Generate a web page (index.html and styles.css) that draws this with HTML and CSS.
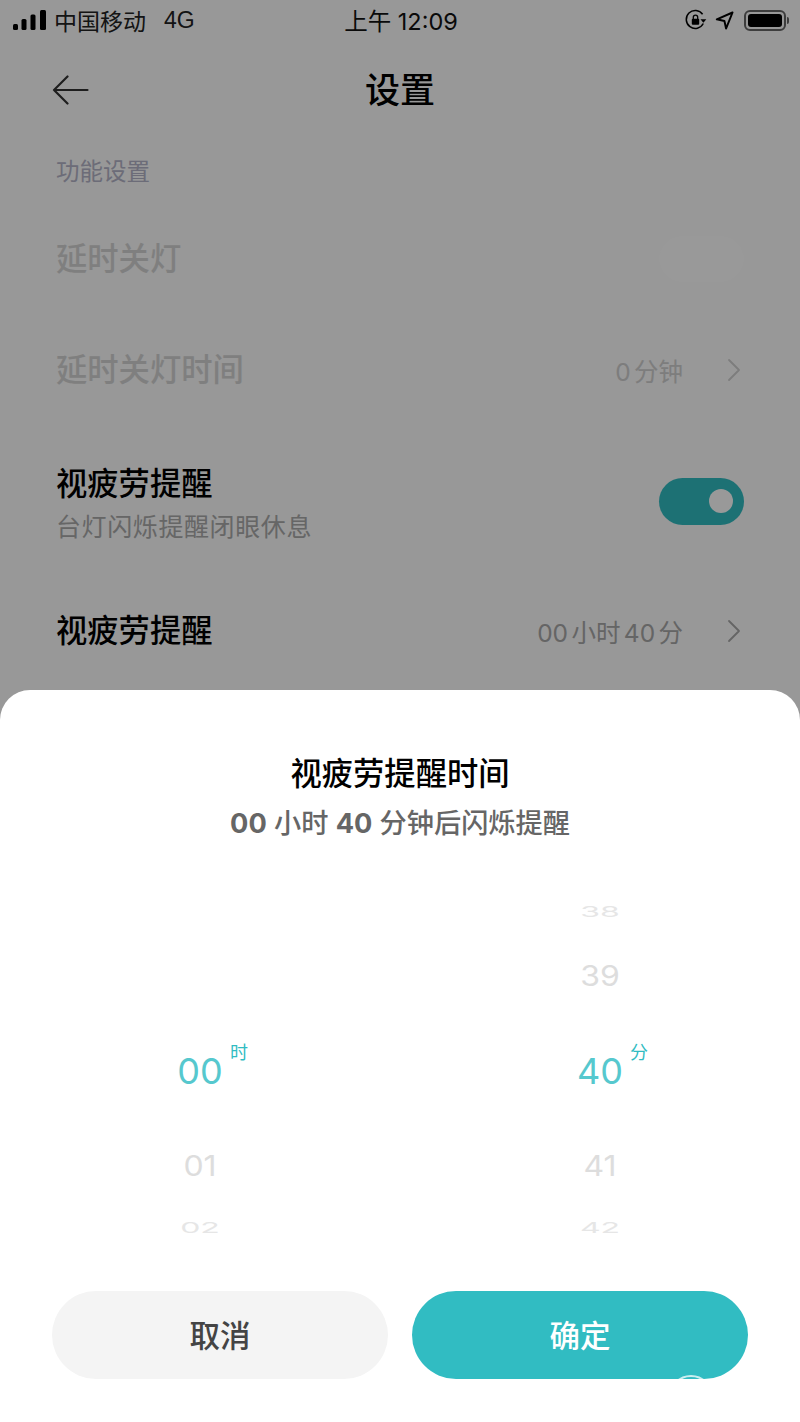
FILE: index.html
```html
<!DOCTYPE html>
<html lang="zh-CN">
<head>
<meta charset="utf-8">
<title>设置</title>
<link rel="stylesheet" href="styles.css">
</head>
<body>
<div class="page">
  <header class="status">
    <div class="status-left">
      <svg class="signal" width="34" height="22" viewBox="0 0 34 22"><rect x="0" y="14" width="5" height="6" rx="1.5"/><rect x="8.5" y="9" width="5" height="11" rx="1.5"/><rect x="17.5" y="4.5" width="5" height="15.5" rx="1.5"/><rect x="27" y="0" width="6" height="20" rx="1.5"/></svg>
      <span class="carrier">中国移动</span>
      <span class="net">4G</span>
    </div>
    <div class="clock">上午 12:09</div>
    <div class="status-right">
      <svg class="rot" width="22" height="22" viewBox="0 0 22 22"><path d="M18.3 14.5A9 9 0 1 1 17.6 5.2" fill="none" stroke="#000" stroke-width="1.5"/><path d="M15.500 10.200h5.800l-2.900 3.600z" fill="#000"/><rect x="6.800" y="9.800" width="7.400" height="6" rx="1" fill="#000"/><path d="M8.300 10V8.300a2.200 2.200 0 0 1 4.400 0V10" fill="none" stroke="#000" stroke-width="1.300"/></svg>
      <svg class="loc" width="19" height="19" viewBox="0 0 19 19"><path d="M17.500 1.500 1.800 8.300l7.600 1.600 1.700 7.600z" fill="none" stroke="#000" stroke-width="2" stroke-linejoin="round"/></svg>
      <div class="battery"><div class="battery-fill"></div></div>
      <div class="battery-nub"></div>
    </div>
  </header>

  <nav class="nav">
    <svg class="back" width="38" height="30" viewBox="0 0 38 30"><path d="M35.500 15H2M15.500 1.500 2 15l13.500 13.500" fill="none" stroke="#333" stroke-width="2.200" stroke-linecap="round" stroke-linejoin="round"/></svg>
    <h1 class="nav-title">设置</h1>
  </nav>

  <div class="section-label">功能设置</div>

  <div class="row row-first row-off">
    <span class="row-title">延时关灯</span>
    <span class="toggle-off"></span>
  </div>
  <div class="row row-second row-off">
    <span class="row-title">延时关灯时间</span>
    <span class="row-end">
      <span class="row-value">0 分钟</span>
      <svg class="chev" width="14" height="24" viewBox="0 0 14 24"><path d="M2 2l10 10L2 22" fill="none" stroke="currentColor" stroke-width="1.800" stroke-linecap="round" stroke-linejoin="round"/></svg>
    </span>
  </div>
  <div class="row row-third">
    <span class="row-text">
      <span class="row-title">视疲劳提醒</span>
      <span class="row-sub">台灯闪烁提醒闭眼休息</span>
    </span>
    <span class="toggle-on"><span class="knob"></span></span>
  </div>
  <div class="row row-fourth">
    <span class="row-title">视疲劳提醒</span>
    <span class="row-end">
      <span class="row-value">00 小时 40 分</span>
      <svg class="chev" width="14" height="24" viewBox="0 0 14 24"><path d="M2 2l10 10L2 22" fill="none" stroke="currentColor" stroke-width="1.800" stroke-linecap="round" stroke-linejoin="round"/></svg>
    </span>
  </div>

  <div class="scrim"></div>

  <section class="sheet">
    <h2 class="sheet-title">视疲劳提醒时间</h2>
    <p class="sheet-sub"><b>00</b> 小时 <b>40</b> 分钟后闪烁提醒</p>
    <div class="wheels">
      <div class="wheel">
        <div class="cell far"></div>
        <div class="cell near"></div>
        <div class="cell current">00<span class="unit">时</span></div>
        <div class="cell near"><span class="tilt">01</span></div>
        <div class="cell far"><span class="squash">02</span></div>
      </div>
      <div class="wheel">
        <div class="cell far"><span class="squash">38</span></div>
        <div class="cell near"><span class="tilt">39</span></div>
        <div class="cell current">40<span class="unit">分</span></div>
        <div class="cell near"><span class="tilt">41</span></div>
        <div class="cell far"><span class="squash">42</span></div>
      </div>
    </div>
    <div class="actions">
      <button class="btn btn-cancel">取消</button>
      <button class="btn btn-ok">确定</button>
    </div>
    <div class="home-ring"></div>
  </section>
</div>
</body>
</html>
```

FILE: styles.css
```css
* { box-sizing: border-box; margin: 0; padding: 0; }
html, body { width: 800px; height: 1422px; overflow: hidden; }
body {
  background: #fff;
  font-family: "Inter", "Noto Sans CJK SC", sans-serif;
  color: #000;
}
.page { position: relative; width: 800px; height: 1422px; overflow: hidden; background: #fdfdfd; }

.status {
  display: grid;
  grid-template-columns: 1fr auto 1fr;
  align-items: center;
  height: 40px;
  padding: 0 11px 0 13px;
  font-size: 21px;
  color: #111;
}
.status-left { display: flex; align-items: center; }
.signal { fill: #000; margin-right: 7px; margin-top: 2px; }
.carrier { font-size: 23px; width: 110px; color: #222; }
.net { font-family: "Liberation Sans", sans-serif; font-size: 23px; color: #222; }
.clock { font-size: 23.500px; color: #111; }
.status-right { display: flex; align-items: center; justify-content: flex-end; }
.rot { margin-right: 8px; }
.loc { margin-right: 10px; }
.battery { width: 42px; height: 21px; border: 2px solid #666; border-radius: 6px; padding: 2px; }
.battery-fill { width: 100%; height: 100%; background: #000; border-radius: 3px; }
.battery-nub { width: 2px; height: 7px; margin-left: 1px; background: #666; border-radius: 0 2px 2px 0; }

.nav { position: relative; display: flex; align-items: center; justify-content: center; height: 100px; }
.back { position: absolute; left: 52px; top: 35px; }
.nav-title { font-size: 35px; font-weight: 500; line-height: 1; }

.section-label { height: 62px; padding: 15px 0 0 56px; font-size: 23.500px; line-height: 34px; color: #b4b4c8; }

.row { display: flex; align-items: center; justify-content: space-between; padding: 0 56px; }
.row-first { height: 113px; }
.row-second { height: 110px; }
.row-third { height: 131px; padding-top: 21px; }
.row-fourth { height: 150px; }
.row-title { font-size: 31.300px; font-weight: 500; line-height: 44px; }
.row-off .row-title { color: #d4d4d4; font-weight: 500; }
.row-off .row-value, .row-off .chev { color: #d0d0d0; }
.row-text { display: flex; flex-direction: column; padding-top: 4px; }
.row-sub { margin-top: 3px; font-size: 25px; line-height: 36px; color: #aaa; letter-spacing: .6px; }
.row-end { display: flex; align-items: center; gap: 44px; color: #a8a8a8; }
.row-value { font-size: 24.500px; word-spacing: -3.500px; }
.chev { color: #a8a8a8; margin-right: 3px; }
.toggle-off { width: 85px; height: 46px; border-radius: 23px; background: #fff; }
.toggle-on { display: flex; align-items: center; justify-content: flex-end; width: 85px; height: 47px; border-radius: 24px; background: #31bcc2; padding-right: 11px; }
.knob { width: 24px; height: 24px; border-radius: 50%; background: #fff; }

.scrim { position: absolute; inset: 0; background: rgba(0, 0, 0, .4); }

.sheet {
  position: absolute;
  left: 0; right: 0; top: 690px; bottom: 0;
  overflow: hidden;
  background: #fff;
  border-radius: 30px 30px 0 0;
  text-align: center;
}
.sheet-title { margin-top: 62px; font-size: 31.300px; font-weight: 500; line-height: 44px; color: #000; }
.sheet-sub { margin-top: 8px; font-size: 27.200px; font-weight: 500; line-height: 40px; color: #666; }
.sheet-sub b { font-weight: 700; }

.wheels { display: flex; height: 347px; margin-top: 52px; }
.wheel { display: grid; grid-template-rows: 31px 95px 95px 95px 31px; width: 400px; }
.cell { display: flex; align-items: center; justify-content: center; position: relative; font-size: 32px; color: #ddd; }
.near { padding-top: 2px; }
.far { overflow: hidden; color: #e6e6e6; }
.tilt { display: block; transform: scaleY(.87); }
.squash { display: block; transform: scaleY(.47); }
.current { padding-top: 2px; font-size: 36px; font-weight: 400; color: #56c8ce; }
.unit { position: absolute; left: 230px; top: 17px; font-family: "Noto Sans CJK SC", sans-serif; font-size: 18px; font-weight: 400; line-height: 24px; color: #31bcc2; }

.actions { display: flex; gap: 24px; padding: 0 52px; margin-top: 48px; }
.btn { flex: 1; height: 88px; padding-bottom: 3px; border: 0; border-radius: 44px; font: 500 30.500px "Inter", "Noto Sans CJK SC", sans-serif; }
.btn-cancel { background: #f4f4f4; color: #444; }
.btn-ok { background: #31bcc2; color: #fff; }
.home-ring { position: absolute; left: 669px; top: 685px; width: 44px; height: 44px; border: 2px solid rgba(255, 255, 255, .75); border-radius: 50%; }
```
